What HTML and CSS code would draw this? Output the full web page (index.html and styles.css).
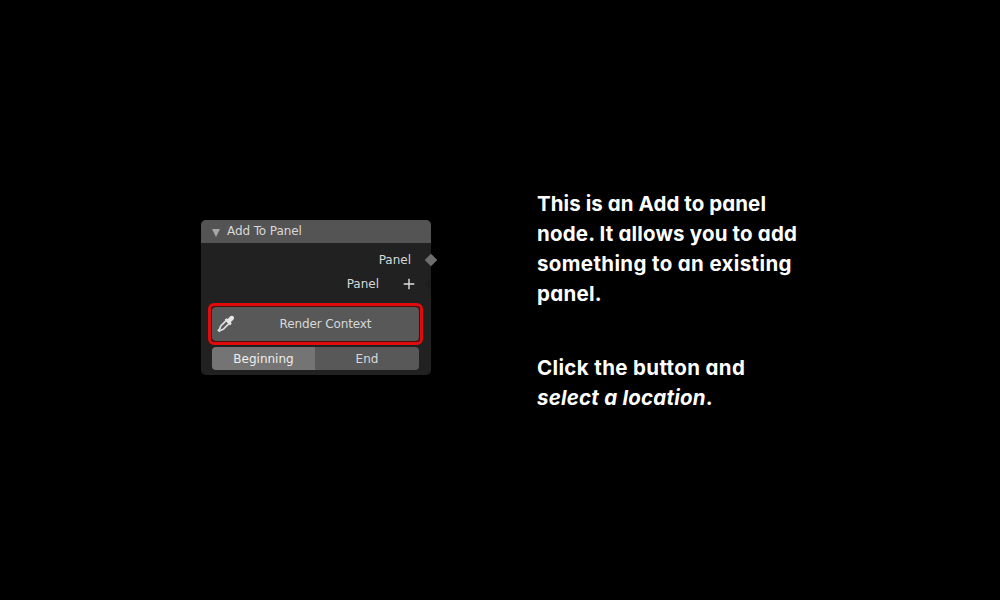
FILE: index.html
```html
<!DOCTYPE html>
<html lang="en">
<head>
<meta charset="utf-8">
<title>Add To Panel</title>
<link rel="stylesheet" href="styles.css">
</head>
<body>
<main class="slide">
  <section class="node">
    <header class="node-header">
      <svg class="arrow" viewBox="0 0 8 8"><path d="M0 0h8L4 8z"/></svg>
      <span>Add To Panel</span>
    </header>
    <div class="socket-row output">
      <span>Panel</span>
      <svg class="socket" viewBox="0 0 14 14"><path d="M7 .7 13.3 7 7 13.3.7 7z"/></svg>
    </div>
    <div class="socket-row add">
      <span>Panel</span>
      <svg class="plus" viewBox="0 0 12 12"><path d="M6 .7v10.6M.7 6h10.6"/></svg>
      <svg class="socket faint" viewBox="0 0 14 14"><path d="M7 .7V13.3L.7 7z"/></svg>
    </div>
    <div class="highlight">
      <button class="picker">
        <svg class="dropper" viewBox="0 0 18 18">
          <path class="bulb" d="M7.6 4.9 9.3 3.2l1.4.7 1.8-2c1.3-1.4 3-1.5 4-.5.9 1 .7 2.5-.4 3.7l-2.2 2 .8 1.5-1.7 1.8z"/>
          <path class="tube" d="M8.9 5.9 4.1 10.7c-.8.8-.9 1.5-1.1 2.5l-1.6 2.1.9.9 2.2-1.4c1-.1 1.7-.5 2.4-1.2l5-5"/>
        </svg>
        <span>Render Context</span>
      </button>
    </div>
    <div class="segments">
      <button class="segment active">Beginning</button>
      <button class="segment">End</button>
    </div>
  </section>
  <article class="copy">
    <p><span class="line l1">This is an Add to panel</span><span class="line l2">node. It allows you to add</span><span class="line l3">something to an existing</span><span class="line l4">panel.</span></p>
    <p><span class="line l5">Click the button and</span><span class="line l6"><em>select a location</em>.</span></p>
  </article>
</main>
</body>
</html>
```
FILE: styles.css
```css
* { box-sizing: border-box; }
body { margin: 0; background: #000; }
.slide {
  width: 1000px; height: 600px; overflow: hidden;
  display: flex; align-items: flex-start; gap: 106px;
  padding: 188px 0 0 201px;
}
.node {
  width: 230px; height: 155px; margin-top: 32px;
  background: #212121; border-radius: 5px;
  font: 12px/16px "DejaVu Sans", sans-serif; color: #d8d8d8;
}
.node-header {
  height: 23px; padding: 0 0 1px 11px;
  display: flex; align-items: center; gap: 7px;
  background: #545454; border-radius: 5px 5px 0 0;
  letter-spacing: -.1px;
}
.arrow { width: 8px; height: 8px; fill: #a8a8a8; margin-top: 3px; }
.socket-row { display: flex; justify-content: flex-end; align-items: center; }
.output { height: 25px; margin-top: 4px; gap: 13px; margin-right: -7px; }
.socket { width: 14px; height: 14px; fill: #6e6e6e; }
.add { height: 24px; gap: 24px; margin-right: -7px; }
.plus { width: 12px; height: 12px; stroke: #dedede; stroke-width: 1.4; fill: none; }
.faint { fill: #1d1d1d; margin-left: -15px; }
.highlight {
  height: 42px; margin: 7px 8px 0 7px;
  border: 3px solid #e00c0c; border-radius: 6px; padding: 1px; background: #4a0d0d;
}
button { border: 0; padding: 0; margin: 0; font: inherit; color: inherit; background: #585858; }
.picker {
  width: 100%; height: 34px; border-radius: 4px;
  display: flex; align-items: center; padding-left: 5px;
  letter-spacing: -.12px;
}
.picker span { flex: 1; padding-left: 1px; padding-right: 4px; text-align: center; }
.dropper { width: 18px; height: 18px; }
.bulb { fill: #e6e6e6; }
.tube { fill: none; stroke: #dcdcdc; stroke-width: 1.7; }
.segments { display: flex; height: 23px; margin: 2px 12px 0 11px; border-radius: 4px; overflow: hidden; letter-spacing: -.1px; }
.segment { flex: 1; }
.active { flex: 0 0 103px; background: #747474; color: #eee; }
.copy { padding-top: 1px; font: 700 20.5px/30px Inter, sans-serif; font-feature-settings: "cv11"; color: #fff; }
.copy p { margin: 0 0 44px; }
.line { display: block; white-space: nowrap; }
.l1 { letter-spacing: .07px; }
.l2 { letter-spacing: .17px; }
.l3 { letter-spacing: .36px; }
.l4 { letter-spacing: .3px; }
.l5 { letter-spacing: .36px; }
.l6 { letter-spacing: .22px; }
.copy em { font-style: italic; }
```
